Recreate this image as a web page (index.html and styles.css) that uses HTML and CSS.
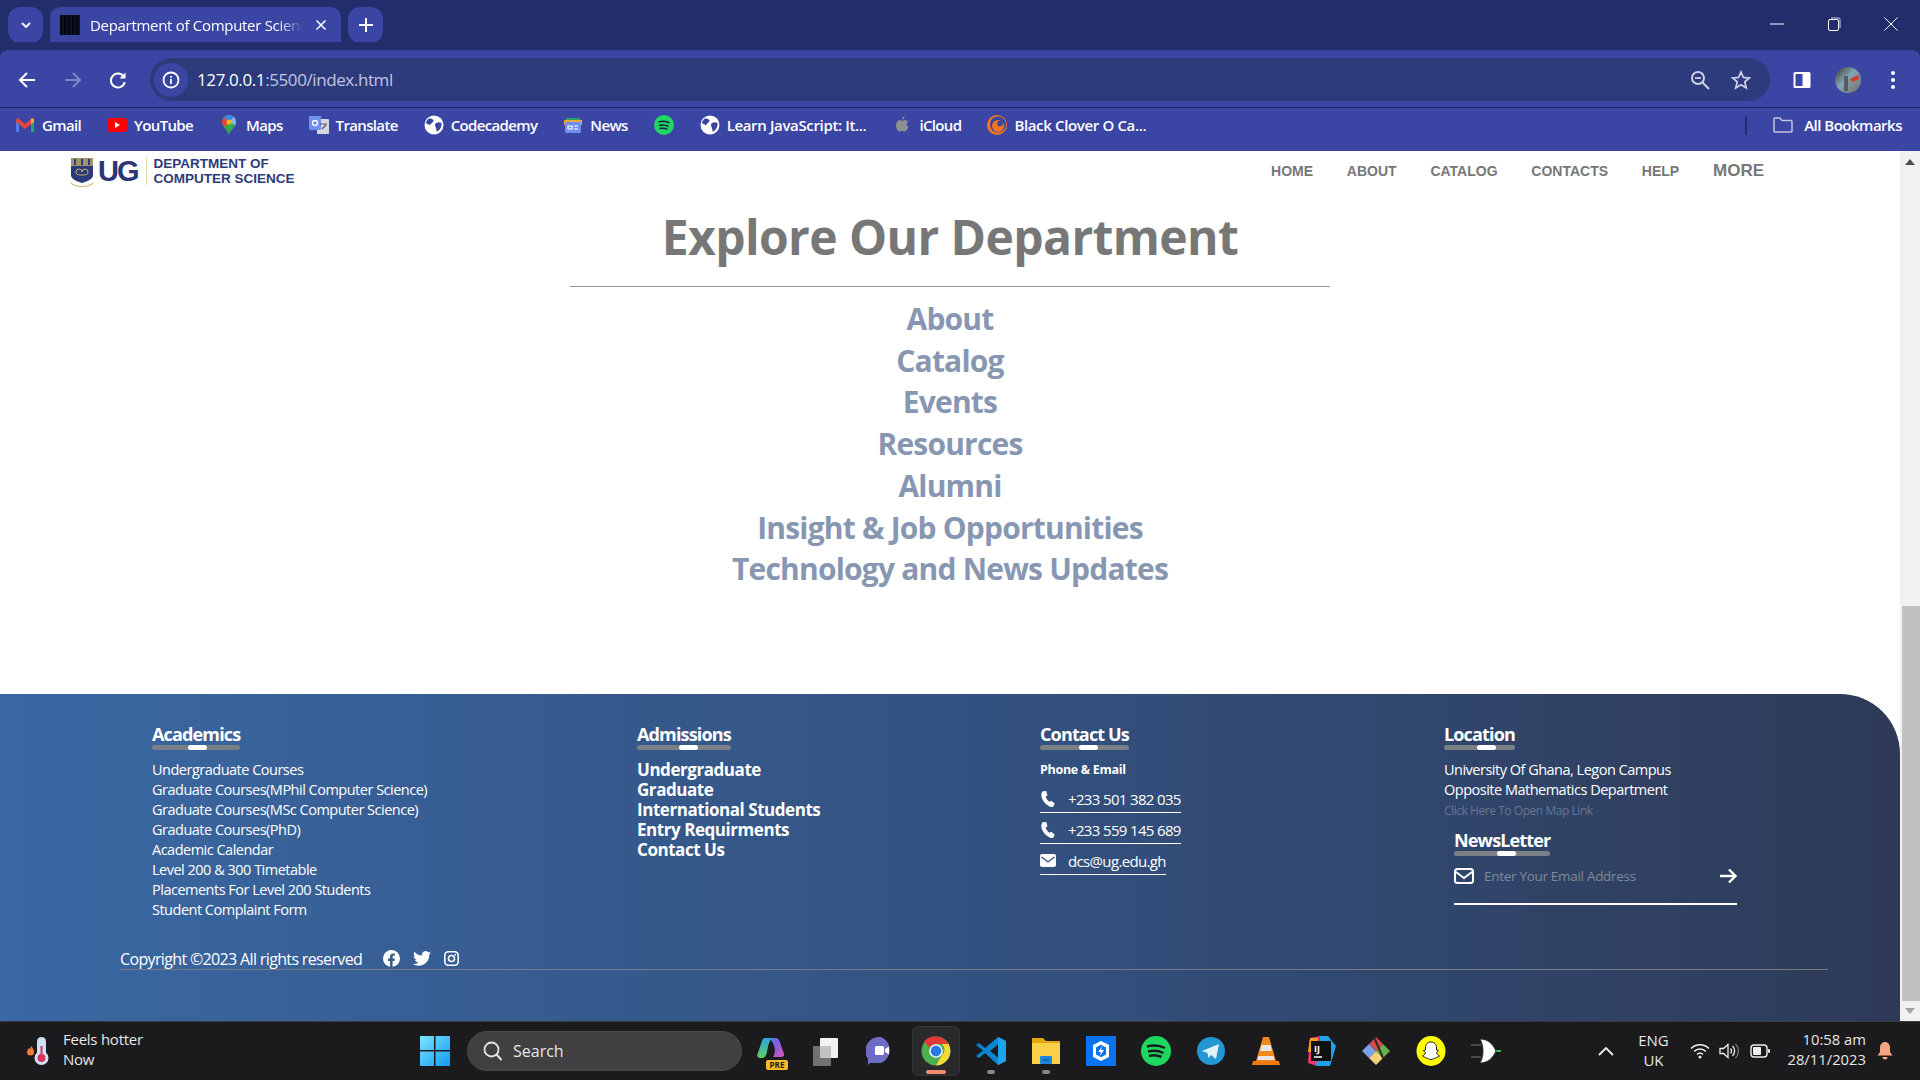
FILE: index.html
```html
<!DOCTYPE html>
<html lang="en">
<head>
<meta charset="utf-8">
<title>Department of Computer Science</title>
<link rel="stylesheet" href="styles.css">
</head>
<body>
<svg class="defs" width="0" height="0">
  <symbol id="globe" viewBox="0 0 20 20"><circle cx="10" cy="10" r="9.5" fill="#fff"/><path d="M5 3.500c2 0 4 .5 4.500 2S7 8 6.500 9.500 4 9 2 8c.3-2 1.500-3.500 3-4.500zM12 8c2-1 4-1 5.500 0 .5 3-1 6.500-4 8.500-1.500 0-1-2-1.500-3.500S10 10 12 8z" fill="#3a44a3"/></symbol>
  <symbol id="phone" viewBox="0 0 16 16"><path d="M3 .3 6.200 0l1.300 4.200-1.800 1.300c.5 2 2 4.200 3.700 5.300l1.800-1.100 3.500 2.700-1.300 3c-.5.600-2 .8-3.200.3C5 13.500 1.500 8.500 1.300 4c0-1.500.7-3.200 1.700-3.700z" fill="#fff"/></symbol>
</svg>

<header class="tabstrip">
  <button class="tab-btn"><svg width="12" height="12" viewBox="0 0 12 12"><path d="M2 4l4 4 4-4" fill="none" stroke="#fff" stroke-width="1.800"/></svg></button>
  <div class="tab">
    <span class="favicon"></span>
    <span class="tab-title">Department of Computer Science</span>
    <svg class="tab-close" width="12" height="12" viewBox="0 0 12 12"><path d="M1.500 1.500l9 9M10.500 1.500l-9 9" stroke="#fff" stroke-width="1.500"/></svg>
  </div>
  <button class="tab-btn new-tab"><svg width="14" height="14" viewBox="0 0 14 14"><path d="M7 0v14M0 7h14" stroke="#fff" stroke-width="2"/></svg></button>
  <div class="window-controls">
    <svg width="14" height="14" viewBox="0 0 14 14"><path d="M0 7h14" stroke="#fff"/></svg>
    <svg width="14" height="14" viewBox="0 0 14 14"><rect x="1.500" y="2.500" width="10" height="11" rx="1.500" fill="none" stroke="#fff"/><path d="M4 1h7.500a1.500 1.500 0 0 1 1.500 1.500V11" fill="none" stroke="#fff" stroke-width=".8"/></svg>
    <svg width="14" height="14" viewBox="0 0 14 14"><path d="M.5.500l13 13M13.500.500l-13 13" stroke="#fff"/></svg>
  </div>
</header>

<div class="toolbar">
  <svg class="tool" width="18" height="18" viewBox="0 0 18 18"><path d="M17 9H2M9 2 2 9l7 7" fill="none" stroke="#fff" stroke-width="2"/></svg>
  <svg class="tool" width="18" height="18" viewBox="0 0 18 18"><path d="M1 9h15M9 2l7 7-7 7" fill="none" stroke="#8087c2" stroke-width="2"/></svg>
  <svg class="tool" width="18" height="18" viewBox="0 0 18 18"><path d="M15 6a7 7 0 1 0 .8 5" fill="none" stroke="#fff" stroke-width="2"/><path d="M16.500 1.500v6h-6z" fill="#fff"/></svg>
  <div class="omnibox">
    <span class="info-chip"><svg width="18" height="18" viewBox="0 0 18 18"><circle cx="9" cy="9" r="7.500" fill="none" stroke="#fff" stroke-width="1.800"/><path d="M9 8v5M9 5v1.800" stroke="#fff" stroke-width="1.800"/></svg></span>
    <span class="url"><b>127.0.0.1</b>:5500/index.html</span>
    <svg class="omni-icon" width="20" height="20" viewBox="0 0 20 20"><circle cx="8" cy="8" r="6" fill="none" stroke="#ced0e6" stroke-width="2"/><path d="M5 8h6" stroke="#ced0e6" stroke-width="1.800"/><path d="M12.500 12.500 19 19" stroke="#ced0e6" stroke-width="2"/></svg>
    <svg class="omni-icon" width="20" height="20" viewBox="0 0 20 20"><path d="m10 2 2.400 5.500 6 .5-4.600 3.900 1.400 5.900L10 14.700l-5.200 3.100 1.400-5.900L1.600 8l6-.5z" fill="none" stroke="#ced0e6" stroke-width="1.800"/></svg>
  </div>
  <div class="toolbar-end">
    <svg width="18" height="18" viewBox="0 0 18 18"><rect x=".5" y="1" width="17" height="16" rx="1.500" fill="#fff"/><rect x="2.500" y="3" width="7" height="12" fill="#3a44a3"/></svg>
    <svg width="26" height="26" viewBox="0 0 26 26"><defs><linearGradient id="av" x1="0" y1="0" x2="1" y2="1"><stop offset="0" stop-color="#3c3426"/><stop offset=".45" stop-color="#7fa5b8"/><stop offset="1" stop-color="#7a6c63"/></linearGradient></defs><circle cx="13" cy="13" r="13" fill="url(#av)"/><path d="M15 12l8-4 1 4-7 3z" fill="#d83a32"/><path d="M9 9h4v15H9z" fill="#585a5c"/></svg>
    <svg class="kebab" width="6" height="20" viewBox="0 0 6 20"><circle cx="3" cy="3" r="2" fill="#fff"/><circle cx="3" cy="10" r="2" fill="#fff"/><circle cx="3" cy="17" r="2" fill="#fff"/></svg>
  </div>
</div>

<nav class="bookmarks">
  <a class="bm"><svg width="20" height="16" viewBox="0 0 20 16"><path d="M1 15V3l3-1v13z" fill="#4d7ef0"/><path d="M16 15V2l3 1v12z" fill="#28a96b"/><path d="M1 3c1-2 2-2 3-1l6 5 6-5c1-1 2-1 3 1v2l-9 7-9-7z" fill="#e8453c"/><path d="M16 2c1-1 2-1 3 1v2l-3 2z" fill="#f7bc2c"/></svg><span>Gmail</span></a>
  <a class="bm"><svg width="20" height="16" viewBox="0 0 20 16"><rect y="1" width="20" height="14" rx="3.500" fill="#f00"/><path d="m8 5 5 3-5 3z" fill="#fff"/></svg><span>YouTube</span></a>
  <a class="bm"><svg width="20" height="20" viewBox="0 0 20 20"><path d="M10 0a7 7 0 0 1 7 7c0 5-5 7-7 13-2-6-7-8-7-13a7 7 0 0 1 7-7z" fill="#34a853"/><path d="M5 2a7 7 0 0 0-2 5c0 2 1 3.500 2 5l5-5z" fill="#ea4335"/><path d="M10 0a7 7 0 0 1 5 2l-5 5-5-5a7 7 0 0 1 5-2z" fill="#4285f4"/><path d="M15 2a7 7 0 0 1 2 5c0 1-.2 2-.7 3L10 7z" fill="#8ab4f8"/><circle cx="10" cy="7" r="2.500" fill="#fbbc04"/></svg><span>Maps</span></a>
  <a class="bm"><svg width="20" height="20" viewBox="0 0 20 20"><rect x="8" y="4" width="12" height="15" rx="1" fill="#d5d8e4"/><path d="M1 1h11v14H1a1 1 0 0 1-1-1V2a1 1 0 0 1 1-1z" fill="#6f8ef0"/><circle cx="6" cy="8" r="2.500" fill="none" stroke="#fff" stroke-width="1.300"/><path d="M11 9h7M13 14l4-4" stroke="#555" stroke-width="1.200"/></svg><span>Translate</span></a>
  <a class="bm"><svg width="20" height="20"><use href="#globe"/></svg><span>Codecademy</span></a>
  <a class="bm"><svg width="20" height="20" viewBox="0 0 20 20"><path d="M3 3h14v6H3z" fill="#2ca160"/><path d="M1 5h18v5H1z" fill="#e8a93a"/><rect x="2" y="7" width="16" height="11" rx="1" fill="#6f8ef0"/><path d="M5 11h4v3H5zM11 11h4M11 14h4" fill="none" stroke="#fff" stroke-width="1.200"/></svg><span>News</span></a>
  <a class="bm"><svg width="20" height="20" viewBox="0 0 20 20"><circle cx="10" cy="10" r="10" fill="#1ed760"/><path d="M4.500 7c4-1 8-.8 11 1M5 10.500c3.500-.8 7-.5 9.500 1M5.500 13.500c3-.6 6-.4 8 .8" fill="none" stroke="#1c1f4f" stroke-width="1.500"/></svg></a>
  <a class="bm wide"><svg width="20" height="20"><use href="#globe"/></svg><span>Learn JavaScript: It...</span></a>
  <a class="bm"><svg width="20" height="20" viewBox="0 0 20 20"><path d="M10 6c1-.8 2-1 3-1 1.300 0 2.500.7 3 1.800-2 1.200-1.700 4.200.5 5-.8 2.500-2.300 4.700-3.800 4.700-1 0-1.500-.6-2.700-.6s-1.700.6-2.700.6C5.500 16.500 4 13 4 10.300 4 7.300 6 5 8 5c.8 0 1.400.6 2 1zM10 4.500c0-1.500 1-3 2.600-3.300 0 1.600-1 3.100-2.600 3.300z" fill="#8f8f8f"/></svg><span>iCloud</span></a>
  <a class="bm wide"><svg width="20" height="20" viewBox="0 0 20 20"><circle cx="10" cy="10" r="10" fill="#f47521"/><circle cx="11" cy="9.500" r="8" fill="#3a44a3"/><circle cx="11" cy="11" r="6" fill="#f47521"/><circle cx="13" cy="8.500" r="2.800" fill="#3a44a3"/></svg><span>Black Clover O Ca...</span></a>
  <span class="bm-divider"></span>
  <a class="bm all"><svg width="20" height="18" viewBox="0 0 20 18"><path d="M1 3a1 1 0 0 1 1-1h5l2 2.500h9a1 1 0 0 1 1 1V15a1 1 0 0 1-1 1H2a1 1 0 0 1-1-1z" fill="none" stroke="#c2c4dd" stroke-width="1.500"/></svg><span>All Bookmarks</span></a>
</nav>

<div class="viewport">
  <div class="page">
    <div class="site-header">
      <a class="logo">
        <svg width="26" height="30" viewBox="0 0 26 30"><path d="M2 1h22v17c0 4-5 6-11 8-6-2-11-4-11-8z" fill="#2b3a7e"/><path d="M2 1h22v8H2z" fill="#c8b25e" opacity=".75"/><path d="M6 2v6M13 2v6M20 2v6" stroke="#2b3a7e" stroke-width="2"/><path d="M7 15a3 3 0 0 1 6 0 3 3 0 0 1 6 0c0 3-3 3-6 3s-6 0-6-3z" fill="none" stroke="#c8b25e"/><path d="M1 25c4 3 8 4 12 4s8-1 12-4l-1 2c-3 2-7 3-11 3s-8-1-11-3z" fill="#c9b76c"/></svg>
        <span class="logo-ug">UG</span>
        <span class="logo-sep"></span>
        <span class="logo-text">DEPARTMENT OF<br>COMPUTER SCIENCE</span>
      </a>
      <nav class="site-nav">
        <a>HOME</a><a>ABOUT</a><a>CATALOG</a><a>CONTACTS</a><a>HELP</a><a class="more">MORE</a>
      </nav>
    </div>

    <main class="explore">
      <h1>Explore Our Department</h1>
      <ul class="explore-links">
        <li>About</li>
        <li>Catalog</li>
        <li>Events</li>
        <li>Resources</li>
        <li>Alumni</li>
        <li>Insight &amp; Job Opportunities</li>
        <li>Technology and News Updates</li>
      </ul>
    </main>

    <footer class="footer">
      <div class="footer-cols">
        <section>
          <h3 class="fh"><span>Academics</span><i class="pos-a"></i></h3>
          <ul class="flist">
            <li>Undergraduate Courses</li>
            <li>Graduate Courses(MPhil Computer Science)</li>
            <li>Graduate Courses(MSc Computer Science)</li>
            <li>Graduate Courses(PhD)</li>
            <li>Academic Calendar</li>
            <li>Level 200 &amp; 300 Timetable</li>
            <li>Placements For Level 200 Students</li>
            <li>Student Complaint Form</li>
          </ul>
        </section>
        <section>
          <h3 class="fh"><span>Admissions</span><i class="pos-b"></i></h3>
          <ul class="flist strong">
            <li>Undergraduate</li>
            <li>Graduate</li>
            <li>International Students</li>
            <li>Entry Requirments</li>
            <li>Contact Us</li>
          </ul>
        </section>
        <section>
          <h3 class="fh"><span>Contact Us</span><i class="pos-b"></i></h3>
          <p class="phone-title">Phone &amp; Email</p>
          <a class="contact"><svg width="16" height="16"><use href="#phone"/></svg><span>+233 501 382 035</span></a>
          <a class="contact"><svg width="16" height="16"><use href="#phone"/></svg><span>+233 559 145 689</span></a>
          <a class="contact"><svg width="16" height="14" viewBox="0 0 16 14"><rect width="16" height="13" rx="2" fill="#fff"/><path d="m1.500 3 6.500 5 6.500-5" fill="none" stroke="#33507e" stroke-width="1.300"/></svg><span>dcs@ug.edu.gh</span></a>
        </section>
        <section>
          <h3 class="fh"><span>Location</span><i class="pos-c"></i></h3>
          <ul class="flist">
            <li>University Of Ghana, Legon Campus</li>
            <li>Opposite Mathematics Department</li>
          </ul>
          <p class="map-link">Click Here To Open Map Link</p>
          <div class="newsletter">
            <h3 class="fh"><span>NewsLetter</span><i class="pos-b"></i></h3>
            <form class="news-form">
              <svg width="20" height="16" viewBox="0 0 20 16"><rect x="1" y="1" width="18" height="14" rx="2.500" fill="none" stroke="#fff" stroke-width="2"/><path d="m2 4 8 6 8-6" fill="none" stroke="#fff" stroke-width="2"/></svg>
              <span class="placeholder">Enter Your Email Address</span>
              <svg width="18" height="16" viewBox="0 0 18 16"><path d="M1 8h15M10 1.500 16.500 8 10 14.500" fill="none" stroke="#fff" stroke-width="2.400"/></svg>
            </form>
          </div>
        </section>
      </div>
      <div class="copyright">
        <span class="copy-text">Copyright ©2023 All rights reserved</span>
        <span class="social">
          <svg width="17" height="17" viewBox="0 0 17 17"><circle cx="8.500" cy="8.500" r="8.500" fill="#fff"/><path d="M7 17v-6H5V8.500h2V6.700C7 4.500 8.300 3.400 10.200 3.400c.9 0 1.800.2 1.800.2v2h-1c-1 0-1.400.6-1.400 1.300v1.600h2.300L11.500 11H9.600v6z" fill="#38608f"/></svg>
          <svg width="18" height="15" viewBox="0 0 18 15"><path d="M18 1.800c-.7.300-1.400.5-2.100.6.800-.5 1.300-1.200 1.600-2-.7.400-1.500.7-2.300.9A3.700 3.700 0 0 0 8.900 4.600C5.900 4.500 3.200 3 1.300.7c-1 1.700-.5 3.800 1.100 4.900-.6 0-1.200-.2-1.700-.5 0 1.800 1.300 3.300 3 3.700-.5.100-1.100.2-1.700.1.500 1.500 1.900 2.500 3.500 2.600A7.400 7.400 0 0 1 0 13c1.700 1.100 3.600 1.700 5.700 1.700 6.900 0 10.800-5.800 10.500-11C17 3.200 17.600 2.500 18 1.800z" fill="#fff"/></svg>
          <svg width="15" height="15" viewBox="0 0 15 15"><rect x=".8" y=".8" width="13.400" height="13.400" rx="3.500" fill="none" stroke="#fff" stroke-width="1.600"/><circle cx="7.500" cy="7.500" r="3" fill="none" stroke="#fff" stroke-width="1.600"/><circle cx="11.300" cy="3.700" r=".9" fill="#fff"/></svg>
        </span>
      </div>
    </footer>
  </div>
  <div class="scrollbar">
    <svg class="sb-arrow" width="10" height="6" viewBox="0 0 10 6"><path d="M5 0l5 6H0z" fill="#505050"/></svg>
    <div class="sb-thumb"></div>
    <svg class="sb-arrow" width="10" height="6" viewBox="0 0 10 6"><path d="M0 0h10L5 6z" fill="#a3a3a3"/></svg>
  </div>
</div>

<div class="taskbar">
  <div class="weather">
    <svg width="24" height="30" viewBox="0 0 24 30"><path d="M4 10c2 2 3 4 3 6a3.500 3.500 0 0 1-7 0c0-2 2-3 2-4.500 0 1 1 1.500 1.500 1 .3-.8 0-1.600.5-2.500z" fill="#f47a3a"/><rect x="10" y="1" width="9" height="22" rx="4.500" fill="#cfe0f2"/><circle cx="14.500" cy="22" r="7" fill="#cfe0f2"/><rect x="13.500" y="10" width="2" height="12" fill="#d9325c"/><circle cx="14.500" cy="22" r="4" fill="#d9325c"/></svg>
    <div class="weather-text"><span>Feels hotter</span><span>Now</span></div>
  </div>
  <svg class="win-logo" width="30" height="30" viewBox="0 0 30 30"><defs><linearGradient id="win" x1="0" y1="0" x2="1" y2="1"><stop offset="0" stop-color="#7ee4ff"/><stop offset="1" stop-color="#0f9bf5"/></linearGradient></defs><path d="M0 0h14v14H0zM15.500 0H30v14H15.500zM0 15.500h14V30H0zM15.500 15.500H30V30H15.500z" fill="url(#win)"/></svg>
  <div class="search">
    <svg width="20" height="20" viewBox="0 0 20 20"><circle cx="8.500" cy="8.500" r="7" fill="none" stroke="#e4e4e4" stroke-width="1.800"/><path d="m13.500 13.500 5 5.500" stroke="#e4e4e4" stroke-width="2"/></svg>
    <span>Search</span>
  </div>
  <div class="apps">
    <span class="app"><svg width="30" height="30" viewBox="0 0 30 30"><defs><linearGradient id="cop1" x1="0" y1="0" x2="0" y2="1"><stop offset="0" stop-color="#2aa8e0"/><stop offset="1" stop-color="#5ecb64"/></linearGradient><linearGradient id="cop2" x1="0" y1="0" x2="1" y2="1"><stop offset="0" stop-color="#3d7fe6"/><stop offset=".5" stop-color="#8a5ae0"/><stop offset="1" stop-color="#e85ab0"/></linearGradient></defs><path d="M13 2h7c2 0 3 1.500 3.500 3L28 18c.5 2-1 3-3 3h-8c3-4 3-12-4-19z" fill="url(#cop2)"/><path d="M9 2h7c-3 3-4 8-5 14-.6 3-2 6-5 6H4c-3 0-3-3-2.500-4L6 5c.5-2 1.500-3 3-3z" fill="url(#cop1)"/></svg><b class="pre">PRE</b></span>
    <span class="app"><svg width="30" height="30" viewBox="0 0 30 30"><rect x="9" y="2" width="18" height="20" rx="1" fill="#f2f2f2"/><rect x="2" y="10" width="18" height="20" rx="1" fill="#7c7c7c" opacity=".9"/><rect x="9" y="10" width="11" height="12" fill="#c2c2c2"/></svg></span>
    <span class="app"><svg width="30" height="30" viewBox="0 0 30 30"><path d="M15 1a14 14 0 0 1 0 26H4l-2 2v-6A14 14 0 0 1 15 1z" fill="#6f6cc4"/><rect x="9" y="10" width="9" height="9" rx="1.500" fill="#fff"/><path d="m19 13 4-2.500v8L19 16z" fill="#fff"/></svg></span>
    <span class="app app-active"><svg width="30" height="30" viewBox="0 0 30 30"><circle cx="15" cy="15" r="14.500" fill="#4caf50"/><path d="M15 .5A14.500 14.500 0 0 1 27.500 8H15a7 7 0 0 0-6.500 4L3 5.500A14.500 14.500 0 0 1 15 .5z" fill="#e53935"/><path d="M27.500 8A14.500 14.500 0 0 1 15 29.500L21 19a7 7 0 0 0 0-11z" fill="#fdd835"/><circle cx="15" cy="15" r="6.800" fill="#fff"/><circle cx="15" cy="15" r="5.400" fill="#2b78e4"/></svg><i class="ind active"></i></span>
    <span class="app"><svg width="30" height="30" viewBox="0 0 30 30"><path d="M22 1 30 5v20l-8 4-13-12 -6 5-3-2 7-5.500L0 9l3-2 6 5z" fill="#0a84d6"/><path d="M22 1 30 5v20l-8 4V1zM22 8.500 14 15l8 6.500z" fill="#1fa2ee"/><path d="m22 8.500-8 6.500 8 6.500z" fill="#1c1c1e"/></svg><i class="ind"></i></span>
    <span class="app"><svg width="30" height="30" viewBox="0 0 30 30"><path d="M1 2h11l3 3h14v22H1z" fill="#e2a80e"/><rect x="1" y="7" width="28" height="21" fill="#fbd14b"/><rect x="9" y="20" width="12" height="8" rx="1" fill="#1a86dc"/><path d="M12 24h6" stroke="#1c3c6c"/></svg><i class="ind"></i></span>
    <span class="app"><svg width="30" height="30" viewBox="0 0 30 30"><rect width="30" height="30" fill="#0a74f0"/><path d="M15 5 7 9v12l8 4 1.500-3L10 18.500v-7L16 8zM15 25l8-4V9l-8-4-1.500 3 6.500 3.500v7L14 22zM16.500 10 12 16h3l-1.500 4.500L18 14h-3z" fill="#fff"/></svg></span>
    <span class="app"><svg width="30" height="30" viewBox="0 0 30 30"><circle cx="15" cy="15" r="15" fill="#1ed760"/><path d="M6 10.500c6-1.500 13-1 18 1.500M7 15.500c5-1.200 11-.8 15.500 1.500M8 20c4-1 9-.6 12.500 1" fill="none" stroke="#1b1b1c" stroke-width="2.500"/></svg></span>
    <span class="app"><svg width="30" height="30" viewBox="0 0 30 30"><circle cx="15" cy="15" r="14" fill="#2496d4"/><path d="m6 15 17-7-3 15-5-4-2.500 3-1-5z" fill="#dff1fb"/></svg></span>
    <span class="app"><svg width="30" height="30" viewBox="0 0 30 30"><path d="M12 1h6l7 24H5z" fill="#f18a1c"/><path d="M10.500 9h9l1.500 6H9zM7.500 20h15l1 4h-17z" fill="#e8e8e8"/><path d="M2 25h26l1 4H1z" fill="#ec7c0e"/></svg></span>
    <span class="app"><svg width="30" height="30" viewBox="0 0 30 30"><path d="M4 2 14 0l-3 30-9-3z" fill="#f0366c"/><path d="M14 0h8l8 10-6 20H10z" fill="#1ea3e8"/><path d="M4 2h8l-3 14H2z" fill="#f9a11b"/><rect x="5" y="5" width="20" height="20" fill="#111"/><text class="ij" x="8" y="16">IJ</text><path d="M8 21h8" stroke="#fff" stroke-width="1.500"/></svg></span>
    <span class="app"><svg width="30" height="30" viewBox="0 0 30 30"><path d="M8 8 15 15 8 22 1 15z" fill="#7aa3ea"/><path d="M22 8l7 7-7 7-7-7z" fill="#69b04c"/><path d="M15 15l7 7-7 7-7-7z" fill="#f2d27a"/><path d="M15 1l7 7-7 7-7-7z" fill="#d94a4a"/><path d="M13 1l9 21" stroke="#2a2a2a" stroke-width="2"/></svg></span>
    <span class="app"><svg width="30" height="30" viewBox="0 0 30 30"><ellipse cx="15" cy="15" rx="14.500" ry="15" fill="#fffc00"/><path d="M15 6c3.500 0 5.500 2.500 5.500 6v2l2 .5c0 1-1.500 1.500-2 2 .5 2 2 3 3 3.500-1 1-3 1-3.500 2-2 0-3 1.500-5 1.500s-3-1.500-5-1.500c-.5-1-2.500-1-3.500-2 1-.5 2.500-1.500 3-3.500-.5-.5-2-1-2-2l2-.5v-2c0-3.500 2-6 5.500-6z" fill="#fff" stroke="#1b1b1c"/></svg></span>
    <span class="app"><svg width="30" height="30" viewBox="0 0 30 30"><path d="M0 9h10M0 21h10" stroke="#4a4a4a" stroke-width="2"/><path d="M24 15h6" stroke="#2fc44e" stroke-width="2"/><path d="M9 3c8 0 13 5 16 12-3 7-8 12-16 12 4-7 4-17 0-24z" fill="#fff" stroke="#333"/></svg></span>
  </div>
  <div class="tray">
    <svg class="t-caret" width="16" height="10" viewBox="0 0 16 10"><path d="m1 9 7-7 7 7" fill="none" stroke="#f0f0f0" stroke-width="1.800"/></svg>
    <div class="lang"><span>ENG</span><span>UK</span></div>
    <svg class="t-wifi" width="20" height="16" viewBox="0 0 20 16"><path d="M1 5.500c5-5 13-5 18 0M4 8.500c3.500-3.500 8.500-3.500 12 0M7 11.500c2-2 4-2 6 0" fill="none" stroke="#f0f0f0" stroke-width="1.500"/><circle cx="10" cy="14" r="1.500" fill="#f0f0f0"/></svg>
    <svg class="t-vol" width="20" height="16" viewBox="0 0 20 16"><path d="M1 5.500h3.500L9 1.500v13l-4.500-4H1z" fill="none" stroke="#f0f0f0" stroke-width="1.300"/><path d="M11.500 5.500a3.500 3.500 0 0 1 0 5M13.500 3a7 7 0 0 1 0 10" fill="none" stroke="#f0f0f0" stroke-width="1.300"/><path d="M16.500 1a10 10 0 0 1 0 14" fill="none" stroke="#777" stroke-width="1.300"/></svg>
    <svg width="20" height="14" viewBox="0 0 20 14"><rect x="1" y="1" width="16" height="12" rx="3" fill="none" stroke="#f0f0f0" stroke-width="1.400"/><rect x="3" y="3" width="8" height="8" rx="1" fill="#f0f0f0"/><rect x="18" y="5" width="2" height="4" rx="1" fill="#f0f0f0"/></svg>
    <div class="clock"><span>10:58 am</span><span>28/11/2023</span></div>
    <svg width="16" height="20" viewBox="0 0 16 20"><path d="M8 1c3 0 5 2.500 5 5.500V11l2.500 3.500H.5L3 11V6.500C3 3.500 5 1 8 1z" fill="#f6a483"/><path d="M5.500 16h5a2.500 2.500 0 0 1-5 0z" fill="#f6a483"/></svg>
  </div>
</div>
</body>
</html>
```

FILE: styles.css
```css
* { box-sizing: border-box; }
html, body { margin: 0; height: 100%; }
body {
  display: flex;
  flex-direction: column;
  width: 1920px;
  height: 1080px;
  overflow: hidden;
  font-family: "Open Sans", "Noto Sans", sans-serif;
  background: #fff;
}
h1, h3, p, ul { margin: 0; padding: 0; }
ul { list-style: none; }
svg { display: block; flex: none; }
.defs { position: absolute; }

/* tab strip */
.tabstrip {
  display: flex;
  height: 50px;
  flex: none;
  padding: 7px 0 0 8px;
  background: #222d6b;
}
.tab-btn {
  display: flex;
  align-items: center;
  justify-content: center;
  width: 35px;
  height: 36px;
  border: 0;
  padding: 0;
  border-radius: 12px;
  background: #3b45a4;
}
.tab {
  display: flex;
  align-items: center;
  width: 291px;
  height: 43px;
  margin-left: 7px;
  padding: 0 14px 7px 10px;
  border-radius: 10px 10px 0 0;
  background: #3b45a4;
}
.new-tab { margin-left: 7px; }
.favicon {
  width: 20px;
  height: 20px;
  background: repeating-linear-gradient(90deg, #03060f 0 2px, #0a1426 2px 4px);
}
.tab-title {
  flex: 1;
  margin-left: 10px;
  overflow: hidden;
  white-space: nowrap;
  color: #fff;
  font-size: 15px;
  letter-spacing: -.3px;
  -webkit-mask-image: linear-gradient(90deg, #000 88%, transparent);
  mask-image: linear-gradient(90deg, #000 88%, transparent);
}
.tab-close { margin-left: 12px; }
.window-controls {
  display: flex;
  gap: 43px;
  margin-left: auto;
  padding: 10px 22px 0 0;
}

/* toolbar */
.toolbar {
  display: flex;
  align-items: center;
  flex: none;
  height: 58px;
  gap: 27.500px;
  padding: 2px 0 0 18px;
  background: #3b45a4;
  border-bottom: 1px solid #1f2660;
  border-radius: 8px 8px 0 0;
  box-shadow: 0 -8px 0 #222d6b;
}
.omnibox {
  display: flex;
  align-items: center;
  width: 1620px;
  height: 43px;
  margin-left: -4.500px;
  padding: 0 19px 0 4px;
  border-radius: 22px;
  background: #2d3a7c;
}
.info-chip {
  display: flex;
  align-items: center;
  justify-content: center;
  width: 34px;
  height: 34px;
  border-radius: 50%;
  background: #3b45a4;
}
.url {
  flex: 1;
  margin-left: 9px;
  color: #c3c6e2;
  font-size: 17px;
  letter-spacing: -.4px;
}
.url b { font-weight: 400; color: #fff; }
.omni-icon { margin-left: 21px; }
.toolbar-end {
  display: flex;
  align-items: center;
  gap: 24px;
  margin-left: -5px;
}
.kebab { margin-left: 5px; }

/* bookmarks */
.bookmarks {
  display: flex;
  align-items: center;
  flex: none;
  height: 43px;
  gap: 26px;
  padding: 0 18px 9px 15px;
  background: #3b45a4;
}
.bm {
  display: flex;
  align-items: center;
  gap: 7px;
  color: #fff;
  font-size: 15px;
  font-weight: 600;
  letter-spacing: -.65px;
  white-space: nowrap;
}
.bm.wide { letter-spacing: -.35px; }
.bm.all { gap: 11px; letter-spacing: -.5px; }
.bm-divider {
  width: 2px;
  height: 19px;
  margin-left: auto;
  background: #222d6b;
}

/* page */
.viewport {
  display: flex;
  flex: 1;
  min-height: 0;
}
.page {
  display: flex;
  flex-direction: column;
  width: 1900px;
}
.scrollbar {
  display: flex;
  flex-direction: column;
  align-items: center;
  width: 20px;
  padding: 8px 0 7px;
  background: #f1f1f1;
}
.sb-thumb {
  align-self: flex-end;
  width: 18px;
  height: 395px;
  margin: auto 0 7px;
  background: #c1c1c1;
}
.site-header {
  display: flex;
  justify-content: space-between;
  height: 56px;
  padding: 6px 136px 0 69px;
}
.logo {
  display: flex;
  align-items: flex-start;
}
.logo-ug {
  margin-left: 3px;
  color: #2b3578;
  font: 700 29px/28px "Liberation Sans", Arial, sans-serif;
  letter-spacing: -2px;
}
.logo-sep {
  width: 1px;
  height: 28px;
  margin-left: 8px;
  background: #e3d9b8;
}
.logo-text {
  margin: -1px 0 0 7px;
  color: #2f3a7a;
  font: 700 13.500px/15px "Liberation Sans", Arial, sans-serif;
}
.site-nav {
  display: flex;
  align-items: center;
  height: 28px;
  gap: 33.800px;
  color: #777;
  font: 700 14px/16px "Liberation Sans", Arial, sans-serif;
}
.site-nav .more { font-size: 17px; }

.explore {
  display: flex;
  flex-direction: column;
  align-items: center;
}
.explore h1 {
  width: 760px;
  padding-bottom: 19px;
  border-bottom: 1px solid #999;
  color: #777;
  font-size: 48px;
  font-weight: 700;
  line-height: 60px;
  letter-spacing: -.6px;
  text-align: center;
}
.explore-links {
  margin-top: 11px;
  color: #8797b2;
  font-size: 30px;
  font-weight: 700;
  line-height: 41.700px;
  letter-spacing: -.8px;
  text-align: center;
}

/* footer */
.footer {
  margin-top: auto;
  height: 327px;
  padding-top: 30px;
  border-top-right-radius: 60px;
  background: linear-gradient(90deg, #3a68a3 0%, #33507e 55%, #2e3a57 100%);
  color: #fff;
}
.footer-cols {
  display: grid;
  grid-template-columns: 485px 403px 404px 1fr;
  height: 224px;
  padding-left: 152px;
}
.fh {
  display: inline-block;
  position: relative;
  font-size: 18px;
  font-weight: 700;
  line-height: 19px;
  letter-spacing: -.85px;
  padding-bottom: 6px;
}
.fh span { display: block; }
.fh::after {
  content: "";
  position: absolute;
  left: 0;
  right: 0;
  bottom: 0;
  height: 5px;
  border-radius: 3px;
  background: #7b7f86;
}
.fh i {
  position: absolute;
  z-index: 1;
  bottom: 0;
  width: 19px;
  height: 5px;
  border-radius: 3px;
  background: #fff;
}
.pos-a { left: 36px; }
.pos-b { left: 50%; margin-left: -5px; }
.pos-c { left: 46%; }
.flist {
  margin-top: 10px;
  font-size: 14.500px;
  line-height: 20px;
  letter-spacing: -.5px;
}
.flist.strong {
  font-size: 17px;
  font-weight: 700;
  letter-spacing: -.45px;
}
.phone-title {
  margin-top: 11px;
  font-size: 12.500px;
  font-weight: 700;
  line-height: 18px;
  letter-spacing: -.3px;
}
.contact {
  display: flex;
  align-items: center;
  width: max-content;
  height: 26px;
  margin-top: 5px;
  gap: 12px;
  padding-bottom: 2px;
  border-bottom: 1px solid #fff;
  font-size: 15px;
  letter-spacing: -.65px;
}
.phone-title + .contact { margin-top: 8px; }
.map-link {
  margin-top: 2px;
  color: #667590;
  font-size: 12px;
  line-height: 18px;
  letter-spacing: -.45px;
}
.newsletter {
  margin: 10px 0 0 10px;
  width: 283px;
}
.news-form {
  display: flex;
  align-items: center;
  height: 49px;
  gap: 10px;
  padding-bottom: 7px;
  border-bottom: 2px solid #fff;
}
.placeholder {
  flex: 1;
  color: #7f8998;
  font-size: 13.500px;
  letter-spacing: -.3px;
}
.copyright {
  display: flex;
  align-items: center;
  height: 22px;
  margin: 0 72px 0 120px;
  border-bottom: 1px solid #767b86;
}
.copy-text {
  font-size: 16px;
  letter-spacing: -.65px;
}
.social {
  display: flex;
  align-items: center;
  gap: 13px;
  margin-left: 21px;
}

/* taskbar */
.taskbar {
  display: flex;
  align-items: center;
  flex: none;
  height: 59px;
  padding: 0 0 1px 27px;
  background: #1b1b1d;
  border-top: 1px solid #3a3a3c;
  color: #e6e6e6;
}
.weather {
  display: flex;
  align-items: center;
  width: 393px;
  gap: 12px;
}
.weather-text {
  display: flex;
  flex-direction: column;
  margin-top: -3px;
  font-size: 15px;
  line-height: 20px;
  letter-spacing: -.25px;
}
.search {
  display: flex;
  align-items: center;
  width: 275px;
  height: 40px;
  margin-left: 17px;
  gap: 10px;
  padding-left: 15px;
  border-radius: 20px;
  border: 1px solid #4a4a4c;
  background: #403f42;
  font-size: 16px;
}
.apps {
  display: flex;
  align-items: center;
  margin-left: 1px;
}
.app {
  display: flex;
  position: relative;
  align-items: center;
  justify-content: center;
  width: 55px;
  height: 50px;
  border-radius: 6px;
  border: 1px solid transparent;
}
.app-active {
  background: #2a2a2d;
  border-color: #333336;
  width: 48px;
  margin: 0 3.500px;
}
.ind {
  position: absolute;
  left: 50%;
  bottom: 1px;
  width: 8px;
  height: 4px;
  margin-left: -4px;
  border-radius: 2px;
  background: #8a8a8a;
}
.ind.active {
  width: 20px;
  margin-left: -10px;
  background: #f28a72;
}
.pre {
  position: absolute;
  left: 22px;
  bottom: 5px;
  width: 22px;
  height: 10px;
  border-radius: 2px;
  background: #f6b92b;
  color: #222;
  font-size: 8px;
  line-height: 10px;
  text-align: center;
}
.ij {
  fill: #fff;
  font-size: 9px;
  font-weight: 700;
}
.tray {
  display: flex;
  align-items: center;
  margin-left: auto;
  padding-right: 27px;
}
.t-caret { margin-right: 19px; }
.lang {
  display: flex;
  flex-direction: column;
  align-items: center;
  width: 40px;
  margin: -2px 17px 0 0;
  font-size: 15px;
  line-height: 20px;
}
.t-wifi { margin-right: 9px; }
.t-vol { margin-right: 11px; }
.clock {
  display: flex;
  flex-direction: column;
  align-items: flex-end;
  margin: -3px 11px 0 17px;
  font-size: 14.800px;
  line-height: 20px;
}
```
